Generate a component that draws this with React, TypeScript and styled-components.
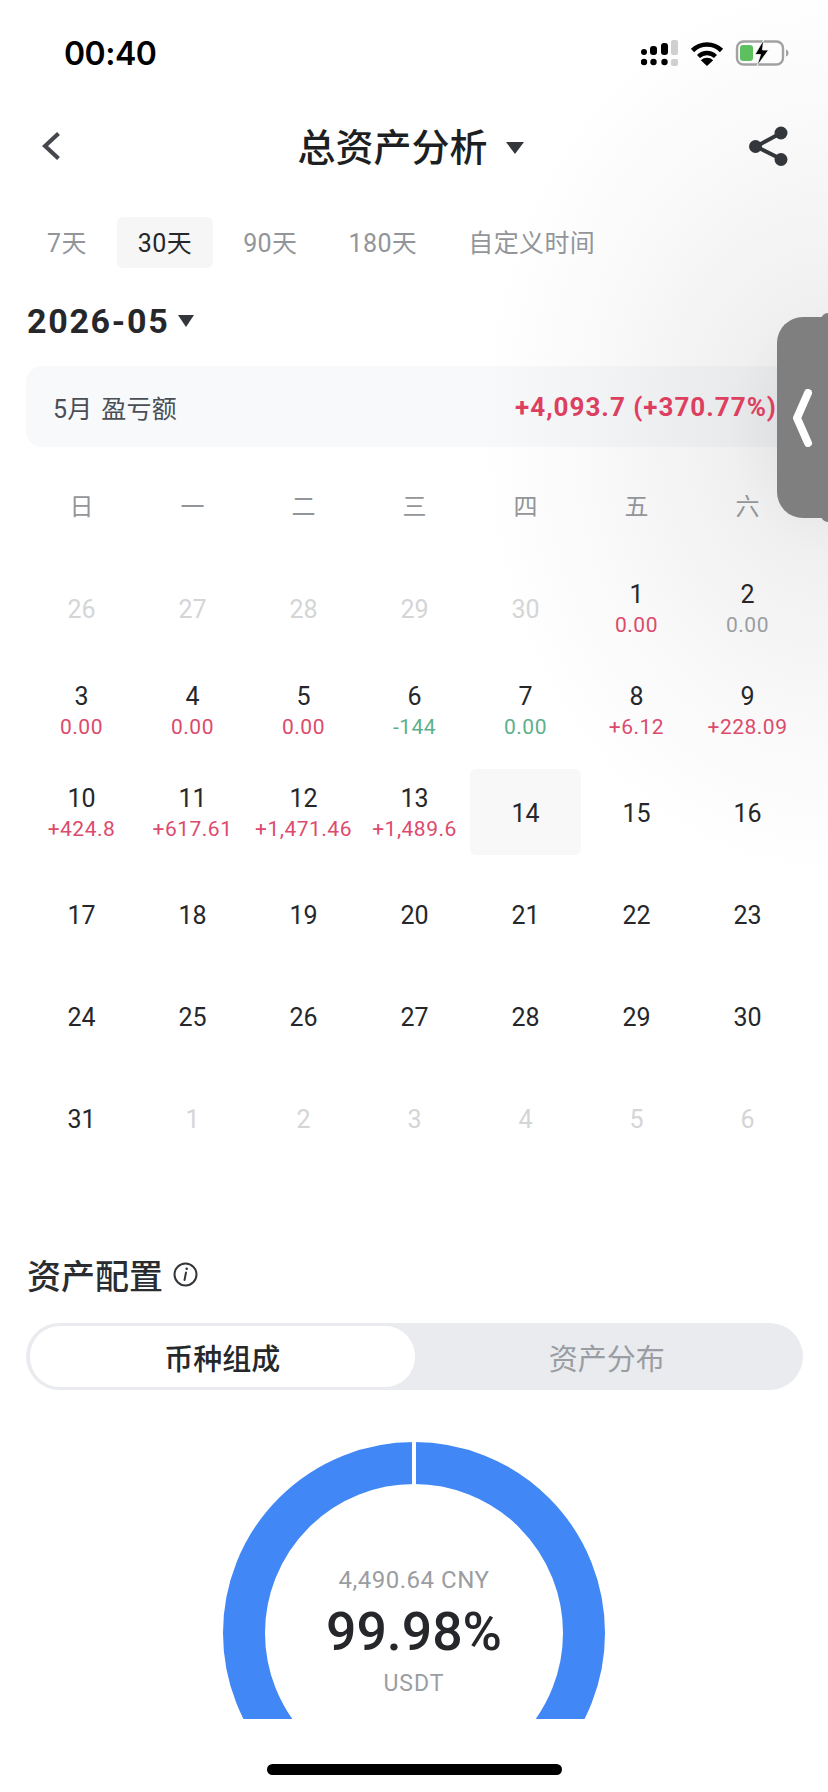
import React from "react";
import styled, { createGlobalStyle } from "styled-components";

const GlobalStyle = createGlobalStyle`
  html, body {
    margin: 0;
    padding: 0;
    background: #fff;
  }
`;

const cjk = `"Noto Sans CJK SC", sans-serif`;
const num = `Roboto, "Noto Sans CJK SC", sans-serif`;

const Page = styled.div`
  position: relative;
  width: 828px;
  height: 1792px;
  overflow: hidden;
  display: flex;
  flex-direction: column;
  font-family: ${num};
  color: #25272b;
  background:
    radial-gradient(ellipse 350px 450px at 100% 430px, #dddddd 0%, #f0f0f0 28%, #f8f8f8 62%, #fdfdfd 88%, rgba(255, 255, 255, 0) 100%),
    #fff;
`;

const StatusBar = styled.div`
  height: 106px;
  display: flex;
  align-items: center;
  justify-content: space-between;
  padding: 0 39px 0 64px;
  box-sizing: border-box;
`;

const Clock = styled.div`
  font-family: Inter, sans-serif;
  font-size: 32px;
  font-weight: 600;
  color: #000;
  letter-spacing: -0.5px;
`;

const StatusIcons = styled.div`
  display: flex;
  align-items: center;
  gap: 11px;
`;

const NavBar = styled.div`
  height: 80px;
  display: flex;
  align-items: center;
  justify-content: space-between;
  padding: 0 40px 0 42px;
`;

const NavTitle = styled.div`
  display: flex;
  align-items: center;
  gap: 18px;
  font-family: ${cjk};
  font-size: 38px;
  font-weight: 500;
  color: #1d1f22;
`;

const NavTitleText = styled.span`
  margin-top: -4px;
`;

const Triangle = styled.span<{ $w: number; $h: number }>`
  display: inline-block;
  width: 0;
  height: 0;
  border-left: ${(p) => p.$w / 2}px solid transparent;
  border-right: ${(p) => p.$w / 2}px solid transparent;
  border-top: ${(p) => p.$h}px solid #33363a;
`;

const NavTriangle = styled(Triangle)`
  margin-top: 3px;
`;

const Tabs = styled.div`
  display: flex;
  gap: 9px;
  margin-top: 31px;
  padding-left: 26px;
`;

const Tab = styled.div<{ $active?: boolean }>`
  height: 51px;
  padding: 0 21px 3px;
  box-sizing: border-box;
  display: flex;
  align-items: center;
  border-radius: 6px;
  font-family: ${num};
  font-size: 25px;
  letter-spacing: 0.4px;
  color: ${(p) => (p.$active ? "#25272b" : "#929599")};
  background: ${(p) => (p.$active ? "#f6f6f6" : "transparent")};
`;

const MonthRow = styled.div`
  display: flex;
  align-items: center;
  gap: 9px;
  height: 42px;
  margin-top: 32px;
  padding-left: 27px;
  font-size: 34px;
  font-weight: 700;
  letter-spacing: 1.7px;
`;

const Summary = styled.div`
  height: 81px;
  margin: 24px 25px 0 26px;
  padding: 0 26px 0 27px;
  display: flex;
  align-items: center;
  justify-content: space-between;
  border-radius: 16px;
  background: rgba(40, 70, 110, 0.03);
`;

const SummaryLabel = styled.div`
  font-family: ${num};
  font-size: 25px;
  letter-spacing: 0.3px;
  word-spacing: 2px;
  color: #4a4f57;
`;

const SummaryValue = styled.div`
  font-size: 26px;
  font-weight: 700;
  color: #dc3f5f;
  letter-spacing: 1px;
`;

const CalendarGrid = styled.div<{ $gap?: number }>`
  display: grid;
  grid-template-columns: repeat(7, 111px);
  margin-left: 26px;
  row-gap: ${(p) => p.$gap ?? 0}px;
`;

const WeekRow = styled(CalendarGrid)`
  margin-top: 37px;
  height: 40px;
  align-items: center;
  justify-items: center;
  font-family: ${cjk};
  font-size: 24px;
  color: #929599;
`;

const DaysGrid = styled(CalendarGrid)`
  margin-top: 41px;
`;

const Cell = styled.div<{ $today?: boolean }>`
  height: 86px;
  box-sizing: border-box;
  padding-top: 3px;
  display: flex;
  flex-direction: column;
  align-items: center;
  justify-content: center;
  border-radius: 6px;
  background: ${(p) => (p.$today ? "#f8f8f8" : "transparent")};
`;

const DayNum = styled.div<{ $muted?: boolean }>`
  font-size: 25px;
  line-height: 31px;
  color: ${(p) => (p.$muted ? "#d4d5d7" : "#25272b")};
`;

const DaySub = styled.div<{ $color: string }>`
  font-size: 21px;
  line-height: 31px;
  letter-spacing: 0.5px;
  white-space: nowrap;
  color: ${(p) => p.$color};
`;

const SectionHead = styled.div`
  display: flex;
  align-items: center;
  gap: 10px;
  height: 40px;
  box-sizing: border-box;
  padding: 0 0 4px 27px;
  margin-top: 95px;
  font-family: ${cjk};
  font-size: 34px;
  font-weight: 500;
  color: #2a2c30;
`;

const Segment = styled.div`
  display: flex;
  height: 67px;
  box-sizing: border-box;
  margin: 27px 25px 0 26px;
  padding: 3px 4px;
  border-radius: 34px;
  background: #e9ebef;
`;

const SegmentItem = styled.div<{ $active?: boolean }>`
  flex: 1;
  display: flex;
  align-items: center;
  justify-content: center;
  border-radius: 30px;
  font-family: ${cjk};
  font-size: 29px;
  font-weight: ${(p) => (p.$active ? 500 : 400)};
  color: ${(p) => (p.$active ? "#25272b" : "#9a9da1")};
  background: ${(p) => (p.$active ? "#fff" : "transparent")};
`;

const Donut = styled.div`
  position: relative;
  width: 382px;
  height: 277px;
  margin: 52px auto 0;
  overflow: hidden;
`;

const DonutCenter = styled.div`
  position: absolute;
  left: 0;
  right: 0;
  top: 123px;
  display: flex;
  flex-direction: column;
  align-items: center;
`;

const DonutAmount = styled.div`
  font-size: 24px;
  line-height: 30px;
  letter-spacing: 0.5px;
  color: #9a9da1;
`;

const DonutPercent = styled.div`
  font-size: 53.5px;
  line-height: 74px;
  font-weight: 500;
  color: #25272b;
`;

const DonutCoin = styled.div`
  font-size: 23px;
  line-height: 30px;
  letter-spacing: 1px;
  color: #9a9da1;
`;

const HomeBar = styled.div`
  width: 295px;
  height: 11px;
  margin: 45px auto 0;
  border-radius: 6px;
  background: #000;
`;

const SideHandle = styled.div`
  position: absolute;
  top: 317px;
  left: 777px;
  width: 51px;
  height: 201px;
  display: flex;
  align-items: center;
  padding-left: 15px;
  box-sizing: border-box;
  border-radius: 26px 0 0 26px;
  background: #7f7f7f;

  /* little lips where the handle meets the screen edge */
  &::before,
  &::after {
    content: "";
    position: absolute;
    right: 0;
    width: 7px;
    height: 8px;
    background: #7f7f7f;
  }
  &::before {
    top: -4px;
    border-top-left-radius: 7px;
  }
  &::after {
    bottom: -4px;
    border-bottom-left-radius: 7px;
  }
`;

const RED = "#dc4a6c";
const GREEN = "#5cb08d";
const GRAY = "#9a9da1";

type Day = { n: number; muted?: boolean; sub?: string; color?: string; today?: boolean };

const days: Day[] = [
  ...[26, 27, 28, 29, 30].map((n) => ({ n, muted: true })),
  { n: 1, sub: "0.00", color: RED },
  { n: 2, sub: "0.00", color: GRAY },
  { n: 3, sub: "0.00", color: RED },
  { n: 4, sub: "0.00", color: RED },
  { n: 5, sub: "0.00", color: RED },
  { n: 6, sub: "-144", color: GREEN },
  { n: 7, sub: "0.00", color: GREEN },
  { n: 8, sub: "+6.12", color: RED },
  { n: 9, sub: "+228.09", color: RED },
  { n: 10, sub: "+424.8", color: RED },
  { n: 11, sub: "+617.61", color: RED },
  { n: 12, sub: "+1,471.46", color: RED },
  { n: 13, sub: "+1,489.6", color: RED },
  { n: 14, today: true },
  ...Array.from({ length: 17 }, (_, i) => ({ n: i + 15 })),
  ...[1, 2, 3, 4, 5, 6].map((n) => ({ n, muted: true })),
];

function SignalIcon() {
  return (
    <svg width="38" height="26" viewBox="0 0 38 26">
      <rect x="0" y="9" width="6" height="6" rx="3" />
      <rect x="9" y="6" width="7" height="9" rx="3" />
      <rect x="20" y="3" width="7" height="12" rx="3" />
      <rect x="30" y="0" width="7" height="15" rx="2" fill="#cfcfcf" />
      <circle cx="3" cy="22" r="3.2" />
      <circle cx="12.5" cy="22" r="3.2" />
      <circle cx="23.5" cy="22" r="3.2" />
      <rect x="30" y="19" width="7" height="7" rx="2" fill="#cfcfcf" />
    </svg>
  );
}

function WifiIcon() {
  return (
    <svg width="34" height="25" viewBox="0 0 34 25" fill="none" stroke="#000">
      <path d="M2.5 9.5C10.5 1.5 23.5 1.5 31.5 9.5" strokeWidth="4.6" />
      <path d="M8.5 15.5C13.5 10.8 20.5 10.8 25.5 15.5" strokeWidth="4.4" />
      <path d="M17 25L10.8 19.3C14.5 16 19.5 16 23.2 19.3Z" fill="#000" stroke="none" />
    </svg>
  );
}

function BatteryIcon() {
  return (
    <svg width="54" height="28" viewBox="0 0 54 28">
      <rect x="2" y="2.5" width="46" height="23" rx="6.5" fill="none" stroke="#a2a2a2" strokeWidth="2.4" />
      <path d="M51 10.5C52.8 11 53.5 12.5 53.5 14C53.5 15.5 52.8 17 51 17.5Z" fill="#a2a2a2" />
      <path d="M5 9C5 7 6 6 8 6H15C17 6 18 7 18 9V19C18 21 17 22 15 22H8C6 22 5 21 5 19Z" fill="#5cc05e" />
      <path d="M28.5 1L20 15.5H25.5L22 27L33.5 11H27.5Z" fill="#000" stroke="#fafafa" strokeWidth="0.8" />
    </svg>
  );
}

function BackIcon() {
  return (
    <svg width="30" height="30" viewBox="0 0 30 30" fill="none">
      <path d="M16.5 2.5L3 15L16.5 27.5" stroke="#44474b" strokeWidth="4.2" />
    </svg>
  );
}

function ShareIcon() {
  return (
    <svg width="39" height="40" viewBox="0 0 39 40" stroke="#33363a" fill="#33363a">
      <path d="M32 7L7 20.5L32 33" fill="none" strokeWidth="4" />
      <circle cx="32" cy="7" r="6.5" stroke="none" />
      <circle cx="6.5" cy="20.5" r="6.5" stroke="none" />
      <circle cx="32" cy="33.5" r="6.5" stroke="none" />
    </svg>
  );
}

function InfoIcon() {
  return (
    <svg width="25" height="25" viewBox="0 0 25 25" fill="none" stroke="#33363a">
      <circle cx="12.5" cy="12.5" r="11" strokeWidth="2" />
      <path d="M13 10.5L11.5 18" strokeWidth="2" strokeLinecap="round" />
      <circle cx="13.7" cy="6.8" r="1.3" fill="#33363a" stroke="none" />
    </svg>
  );
}

function HandleChevron() {
  return (
    <svg width="22" height="58" viewBox="0 0 22 58" fill="none">
      <path d="M16 4L5 29L16 54" stroke="#fff" strokeWidth="8" strokeLinecap="round" strokeLinejoin="round" />
    </svg>
  );
}

function DonutRing() {
  return (
    <svg width="382" height="382" viewBox="0 0 382 382" fill="none">
      <circle cx="191" cy="191" r="170" stroke="#4187f5" strokeWidth="42" />
      <path d="M191 0V42" stroke="#fff" strokeWidth="4" />
    </svg>
  );
}

export default function App() {
  return (
    <Page>
      <GlobalStyle />
      <StatusBar>
        <Clock>00:40</Clock>
        <StatusIcons>
          <SignalIcon />
          <WifiIcon />
          <BatteryIcon />
        </StatusIcons>
      </StatusBar>
      <NavBar>
        <BackIcon />
        <NavTitle>
          <NavTitleText>总资产分析</NavTitleText>
          <NavTriangle $w={18} $h={12} />
        </NavTitle>
        <ShareIcon />
      </NavBar>
      <Tabs>
        <Tab>7天</Tab>
        <Tab $active>30天</Tab>
        <Tab>90天</Tab>
        <Tab>180天</Tab>
        <Tab>自定义时间</Tab>
      </Tabs>
      <MonthRow>
        2026-05
        <Triangle $w={16} $h={12} />
      </MonthRow>
      <Summary>
        <SummaryLabel>5月 盈亏额</SummaryLabel>
        <SummaryValue>+4,093.7 (+370.77%)</SummaryValue>
      </Summary>
      <WeekRow>
        {["日", "一", "二", "三", "四", "五", "六"].map((d) => (
          <div key={d}>{d}</div>
        ))}
      </WeekRow>
      <DaysGrid $gap={16}>
        {days.map((d, i) => (
          <Cell key={i} $today={d.today}>
            <DayNum $muted={d.muted}>{d.n}</DayNum>
            {d.sub && <DaySub $color={d.color ?? RED}>{d.sub}</DaySub>}
          </Cell>
        ))}
      </DaysGrid>
      <SectionHead>
        资产配置
        <InfoIcon />
      </SectionHead>
      <Segment>
        <SegmentItem $active>币种组成</SegmentItem>
        <SegmentItem>资产分布</SegmentItem>
      </Segment>
      <Donut>
        <DonutRing />
        <DonutCenter>
          <DonutAmount>4,490.64 CNY</DonutAmount>
          <DonutPercent>99.98%</DonutPercent>
          <DonutCoin>USDT</DonutCoin>
        </DonutCenter>
      </Donut>
      <HomeBar />
      <SideHandle>
        <HandleChevron />
      </SideHandle>
    </Page>
  );
}
